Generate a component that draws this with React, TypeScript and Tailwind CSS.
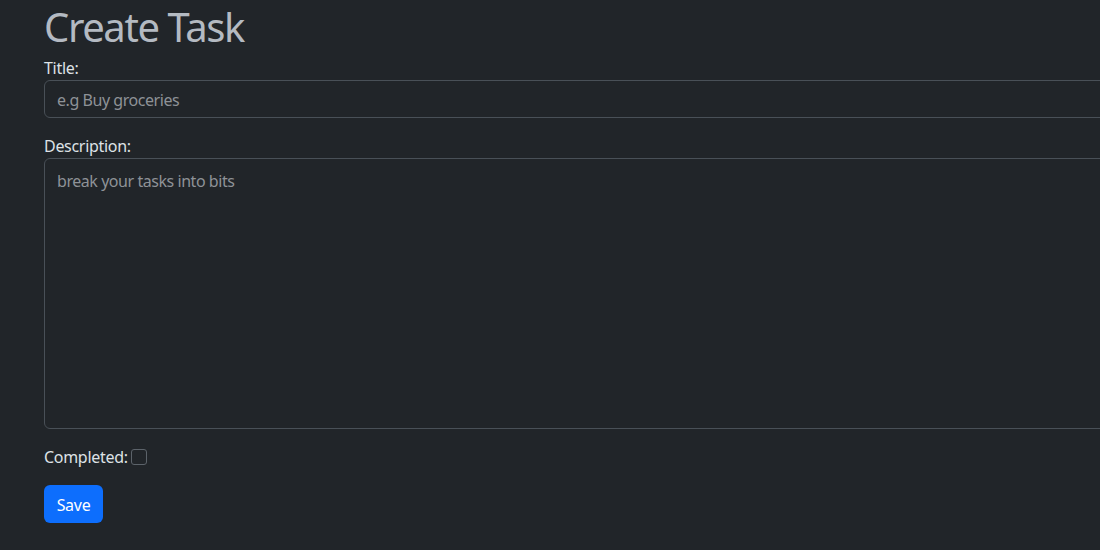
import React from "react";

function App() {
  return (
    <div
      className="h-[550px] w-[1100px] overflow-hidden bg-[#212529] text-[#dee2e6]"
      style={{ fontFamily: '"Segoe UI", "Noto Sans", "Open Sans", sans-serif' }}
    >
      <form className="w-[1100px] pl-[44px] tracking-[-0.3px]">
        <h1 className="mb-[5px] pt-[3px] text-[40px] leading-[48px] font-normal tracking-[-1.4px] text-[#b4bac2]">
          Create Task
        </h1>

        <div className="mb-4">
          <label htmlFor="title" className="block text-base leading-6">
            Title:
          </label>
          <input
            id="title"
            type="text"
            placeholder="e.g Buy groceries"
            className="block h-[38px] w-[1100px] rounded-md border border-[#495057] bg-[#212529] px-3 pt-[2px] text-base tracking-[-0.45px] text-[#dee2e6] outline-none placeholder:text-[#8e9297]"
          />
        </div>

        <div className="mb-4">
          <label htmlFor="description" className="block text-base leading-6">
            Description:
          </label>
          <textarea
            id="description"
            placeholder="break your tasks into bits"
            className="block h-[271px] w-[1100px] resize-none rounded-md border border-[#495057] bg-[#212529] px-3 pt-[10px] text-base leading-6 tracking-[-0.45px] text-[#dee2e6] outline-none placeholder:text-[#8e9297]"
          />
        </div>

        <div className="mb-4 flex items-center gap-[3px] leading-6">
          <label htmlFor="completed">Completed:</label>
          <input
            id="completed"
            type="checkbox"
            className="h-4 w-4 appearance-none rounded-[3px] border border-[#5c636a] bg-[#212529]"
          />
        </div>

        <button
          type="button"
          className="h-[38px] w-[59px] rounded-md bg-[#0d6efd] pt-[2px] text-base text-white"
        >
          Save
        </button>
      </form>
    </div>
  );
}

export default App;
